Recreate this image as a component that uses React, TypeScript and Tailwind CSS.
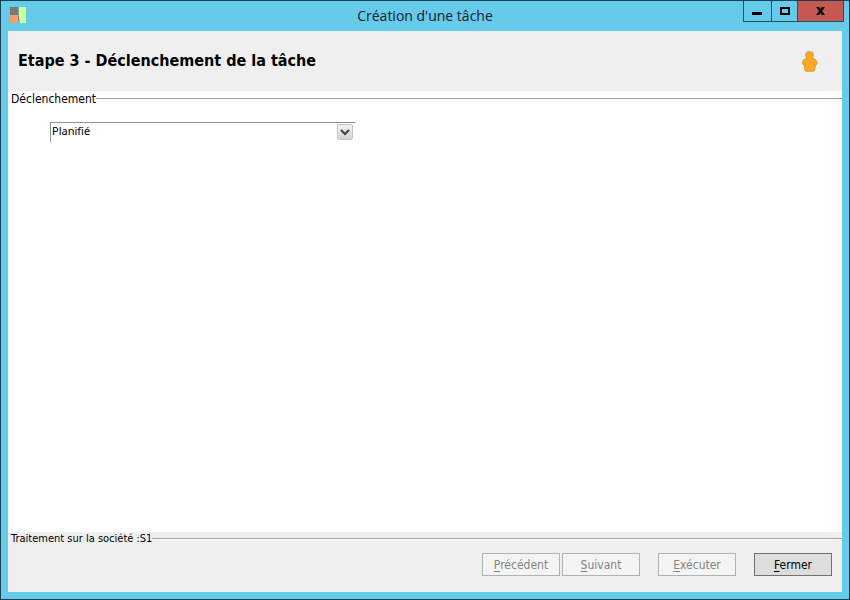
import React, { useState } from "react";

interface ActionButtonProps {
  label: string;
  disabled?: boolean;
}

const ActionButton: React.FC<ActionButtonProps> = ({ label, disabled }) => {
  return (
    <button
      type="button"
      disabled={disabled}
      className="h-[23px] w-[78px] border border-[#707070] bg-[#dddddd] text-center font-['DejaVu_Sans_Condensed','DejaVu_Sans',sans-serif] text-[12px] leading-5 text-black disabled:border-[#adb2b5] disabled:bg-[#f4f4f4] disabled:text-[#838383]"
    >
      <span className="underline underline-offset-2">{label.charAt(0)}</span>
      {label.slice(1)}
    </button>
  );
};

const AppIcon = () => (
  <svg width="16" height="16" viewBox="0 0 16 16" aria-hidden="true">
    <rect width="8" height="8" fill="#777777" />
    <rect y="8" width="8" height="8" fill="#fb9b6b" />
    <path d="M9 0h7v16h-6l-1-4z" fill="#ccff99" />
    <path d="M8 0h1v11l1 5H9l-1-4z" fill="#7fa99c" />
    <path d="M8 9h1v4H8z" fill="#777777" />
  </svg>
);

const PersonIcon = () => (
  <svg width="16" height="21" viewBox="0 0 16 21" aria-hidden="true">
    <path
      d="M3.500 7.500h8.500l2.500 2.500.700 3-1.700 1.500-.500 2-.500 3-1 .700H4l-1-.700-.500-5.500-1.500-.500L.500 12l.700-2.500z"
      fill="#fcaa20"
      stroke="#cf8f2c"
      strokeWidth="0.900"
      strokeLinejoin="round"
    />
    <ellipse cx="7.500" cy="4" rx="4" ry="3.500" fill="#fcaa20" stroke="#d09a45" strokeWidth="0.900" />
    <path d="M4.500 8h6" stroke="#fcaa20" strokeWidth="2" />
    <path d="M3 11.500v2.500M12.500 11.500v2.500" stroke="#ea9c1c" />
  </svg>
);

const TitleBar = () => {
  return (
    <header className="grid h-[30px] shrink-0 grid-cols-[1fr_auto_1fr] items-start">
      <div className="pt-[6px] pl-[9px]">
        <AppIcon />
      </div>
      <h1 className="pt-1 font-['Open_Sans',sans-serif] text-[14px] leading-[22px] text-[#10212b]">
        Création d'une tâche
      </h1>
      <div className="mr-[5px] flex h-[21px] justify-self-end border-x border-b border-[#25505f]">
        <button
          type="button"
          aria-label="Réduire"
          className="flex w-7 items-center justify-center border-r border-[#25505f]"
        >
          <svg width="11" height="10" viewBox="0 0 11 10" shapeRendering="crispEdges">
            <path d="M0 6h10v3H0z" />
          </svg>
        </button>
        <button
          type="button"
          aria-label="Agrandir"
          className="flex w-[26px] items-center justify-center border-r border-[#25505f]"
        >
          <svg width="10" height="8" viewBox="0 0 10 8" shapeRendering="crispEdges">
            <path d="M0 0h10v8H0zM2 2v4h6V2z" fillRule="evenodd" />
          </svg>
        </button>
        <button
          type="button"
          aria-label="Fermer la fenêtre"
          className="flex w-[45px] items-center justify-center bg-[#c75a50]"
        >
          <svg width="9" height="8" viewBox="0 0 9 8">
            <path d="M0 0h3l1.500 2L6 0h3L6 4l3 4H6L4.500 6 3 8H0l3-4z" />
          </svg>
        </button>
      </div>
    </header>
  );
};

export default function App() {
  const [trigger, setTrigger] = useState("Planifié");

  return (
    <div className="flex min-h-screen flex-col border border-[#173f50] bg-[#66cbea] text-black">
      <TitleBar />
      <main className="mx-[7px] mb-[7px] flex grow flex-col bg-white">
        <div className="flex h-[60px] items-center justify-between bg-[#efefef] pr-6 pl-[10px]">
          <h2 className="font-['DejaVu_Sans_Condensed','DejaVu_Sans',sans-serif] text-[16px] leading-6 font-bold">
            Etape 3 - Déclenchement de la tâche
          </h2>
          <PersonIcon />
        </div>

        <section className="grow">
          <div className="flex h-[15px] items-center pl-[3px]">
            <label
              htmlFor="trigger"
              className="font-['DejaVu_Sans_Condensed','DejaVu_Sans',sans-serif] text-[12px] leading-4"
            >
              Déclenchement
            </label>
            <div className="h-px grow bg-[#9f9f9f]" />
          </div>
          <div className="relative mt-4 ml-[42px] w-[305px]">
            <select
              id="trigger"
              value={trigger}
              onChange={(e) => setTrigger(e.target.value)}
              className="block h-5 w-full appearance-none border-t border-l border-[#8f8f8f] bg-white pb-[3px] pl-px font-['Noto_Sans',sans-serif] text-[11px] leading-4"
            >
              <option>Planifié</option>
              <option>Immédiat</option>
            </select>
            <span className="pointer-events-none absolute top-[2px] right-[2px] flex size-4 items-center justify-center rounded-xs border border-[#c4c4c4] bg-linear-to-b from-[#f2f2f2] to-[#d4d4d4]">
              <svg width="10" height="7" viewBox="0 0 10 7" aria-hidden="true">
                <path d="M1 1l4 4 4-4" fill="none" stroke="#444444" strokeWidth="2.200" />
              </svg>
            </span>
          </div>
        </section>

        <footer className="bg-[#efefef]">
          <div className="flex h-[14px] items-center pl-[3px]">
            <span className="font-['DejaVu_Sans_Condensed','DejaVu_Sans',sans-serif] text-[11px] leading-4">
              Traitement sur la société :S1
            </span>
            <div className="h-[2px] grow border-t border-[#9f9f9f] bg-white" />
          </div>
          <div className="flex justify-end gap-[18px] pt-[7px] pr-[10px] pb-4">
            <div className="flex gap-[2px]">
              <ActionButton label="Précédent" disabled />
              <ActionButton label="Suivant" disabled />
            </div>
            <ActionButton label="Exécuter" disabled />
            <ActionButton label="Fermer" />
          </div>
        </footer>
      </main>
    </div>
  );
}
